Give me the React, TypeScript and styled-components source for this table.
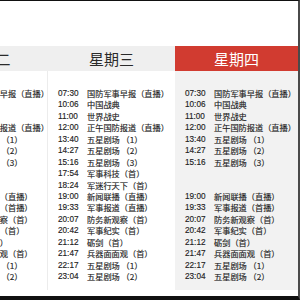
import React from 'react'
import styled, { createGlobalStyle } from 'styled-components'

const GlobalStyle = createGlobalStyle`
  html, body {
    margin: 0;
    padding: 0;
    background: #fff;
  }
  * { box-sizing: border-box; }
`

const Frame = styled.div`
  width: 300px;
  height: 300px;
  overflow: hidden;
  background: #fff;
  border-top: 1px solid #111;
  border-right: 2px solid #4a4a4a;
  border-bottom: 4px solid #111;
  padding-top: 45px;
  font-family: "Liberation Sans", "Noto Sans CJK SC", sans-serif;
`

// the week strip is scrolled so 星期二 is mostly off to the left
const Track = styled.div`
  display: flex;
  margin-left: -72px;
`

const Column = styled.div<{ $w: number }>`
  width: ${p => p.$w}px;
  flex: none;
  display: flex;
  flex-direction: column;
`

const DayHeader = styled.div<{ $active?: boolean }>`
  height: 25px;
  display: flex;
  align-items: center;
  justify-content: center;
  background: ${p => (p.$active ? '#d13b30' : '#efefef')};
  color: ${p => (p.$active ? '#fff' : '#2a2a2a')};
  font-family: "Noto Sans CJK SC", sans-serif;
  font-size: 15px;
`

const DayBody = styled.div<{ $active?: boolean; $line?: boolean }>`
  height: 219px;
  padding: 17px 0 0 10px;
  background: ${p => (p.$active ? '#f2f2f2' : '#fff')};
  border-right: ${p => (p.$line ? '1px solid #ececec' : 'none')};
`

const Row = styled.div`
  display: flex;
  height: 11.45px;
  line-height: 11.45px;
  font-size: 8.2px;
  color: #1e1e1e;
  white-space: nowrap;
  -webkit-text-stroke: 0.15px #1e1e1e;
`

const Time = styled.span`
  width: 29px;
  flex: none;
  font-family: "Liberation Sans", sans-serif;
`

const Title = styled.span`
  font-family: "Noto Sans CJK SC", sans-serif;
`

type Item = [string, string] | null

const tue: Item[] = [
  ['07:30', '国防军事早报（直播）'],
  ['10:06', '中国战典'],
  ['11:00', '世界战史'],
  ['12:00', '正午国防报道（直播）'],
  ['13:40', '五星剧场 （1）'],
  ['14:27', '五星剧场 （2）'],
  ['15:16', '五星剧场 （3）'],
  null,
  null,
  ['19:00', '新闻联播（直播）'],
  ['19:33', '军事报道（首播）'],
  ['20:07', '防务新观察（首）'],
  ['20:42', '军事纪实（首）'],
  ['21:12', '砺剑（首）'],
  ['21:47', '兵器面面观（首）'],
  ['22:17', '五星剧场 （1）'],
  ['23:04', '五星剧场 （2）'],
]

const wed: Item[] = [
  ['07:30', '国防军事早报（直播）'],
  ['10:06', '中国战典'],
  ['11:00', '世界战史'],
  ['12:00', '正午国防报道（直播）'],
  ['13:40', '五星剧场 （1）'],
  ['14:27', '五星剧场 （2）'],
  ['15:16', '五星剧场 （3）'],
  ['17:54', '军事科技（首）'],
  ['18:24', '军迷行天下（首）'],
  ['19:00', '新闻联播（直播）'],
  ['19:33', '军事报道（直播）'],
  ['20:07', '防务新观察（首）'],
  ['20:42', '军事纪实（首）'],
  ['21:12', '砺剑（首）'],
  ['21:47', '兵器面面观（首）'],
  ['22:17', '五星剧场 （1）'],
  ['23:04', '五星剧场 （2）'],
]

const thu: Item[] = [
  ['07:30', '国防军事早报（直播）'],
  ['10:06', '中国战典'],
  ['11:00', '世界战史'],
  ['12:00', '正午国防报道（直播）'],
  ['13:40', '五星剧场 （1）'],
  ['14:27', '五星剧场 （2）'],
  ['15:16', '五星剧场 （3）'],
  null,
  null,
  ['19:00', '新闻联播（直播）'],
  ['19:33', '军事报道（首播）'],
  ['20:07', '防务新观察（首）'],
  ['20:42', '军事纪实（首）'],
  ['21:12', '砺剑（首）'],
  ['21:47', '兵器面面观（首）'],
  ['22:17', '五星剧场 （1）'],
  ['23:04', '五星剧场 （2）'],
]

const days = [
  { name: '星期二', width: 120, items: tue, line: true },
  { name: '星期三', width: 127, items: wed, line: false },
  { name: '星期四', width: 123, items: thu, active: true },
]

function App() {
  return (
    <>
      <GlobalStyle />
      <Frame>
        <Track>
          {days.map(d => (
            <Column key={d.name} $w={d.width}>
              <DayHeader $active={d.active}>{d.name}</DayHeader>
              <DayBody $active={d.active} $line={d.line}>
                {d.items.map((it, i) => (
                  <Row key={i}>
                    {it ? (
                      <>
                        <Time>{it[0]}</Time>
                        <Title>{it[1]}</Title>
                      </>
                    ) : null}
                  </Row>
                ))}
              </DayBody>
            </Column>
          ))}
        </Track>
      </Frame>
    </>
  )
}

export default App
